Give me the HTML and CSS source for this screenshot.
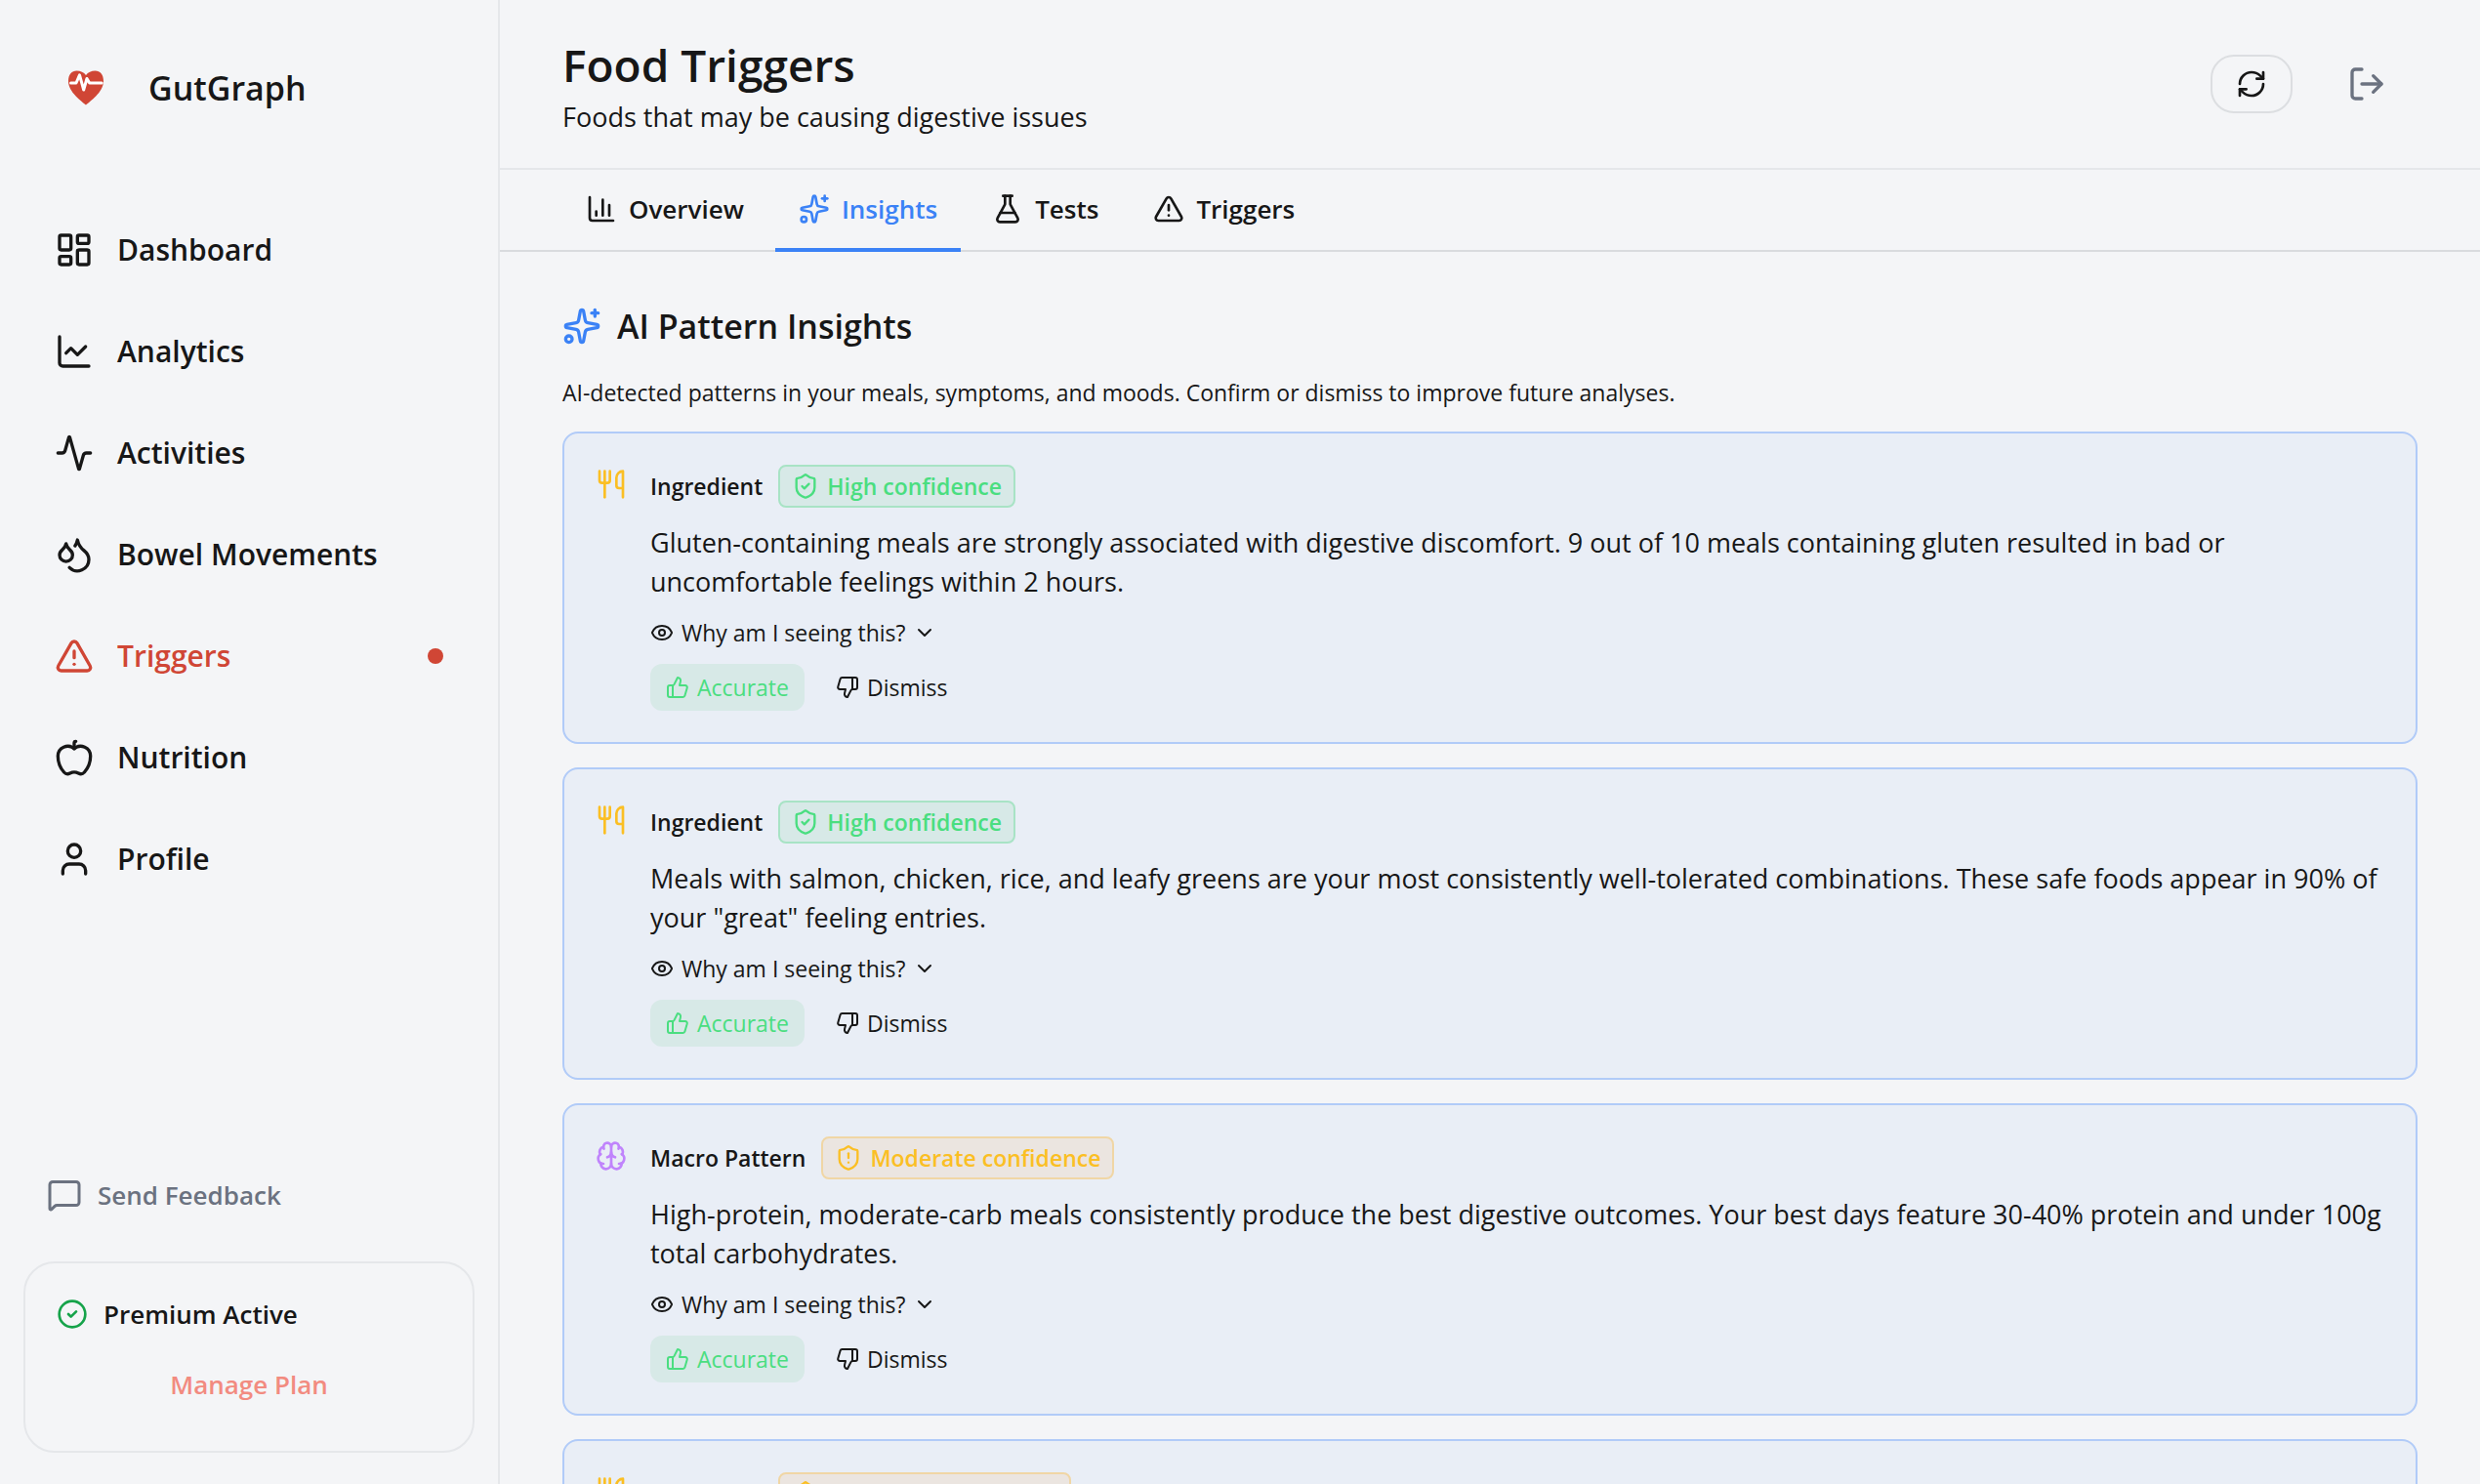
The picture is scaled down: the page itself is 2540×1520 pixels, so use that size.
FILE: index.html
```html
<!DOCTYPE html>
<html lang="en">
<head>
    <meta charset="UTF-8">
    <meta name="viewport" content="width=device-width, initial-scale=1.0">
    <title>GutGraph - Food Triggers</title>
    <link rel="stylesheet" href="styles.css">
</head>
<body>
    <!-- Icon sprite -->
    <svg class="sprite" aria-hidden="true">
        <symbol id="i-dashboard" viewBox="0 0 24 24"><rect width="7" height="9" x="3" y="3" rx="1"/><rect width="7" height="5" x="14" y="3" rx="1"/><rect width="7" height="9" x="14" y="12" rx="1"/><rect width="7" height="5" x="3" y="16" rx="1"/></symbol>
        <symbol id="i-line" viewBox="0 0 24 24"><path d="M3 3v16a2 2 0 0 0 2 2h16"/><path d="m19 9-5 5-4-4-3 3"/></symbol>
        <symbol id="i-activity" viewBox="0 0 24 24"><path d="M22 12h-2.48a2 2 0 0 0-1.93 1.46l-2.35 8.36a.25.25 0 0 1-.48 0L9.24 2.18a.25.25 0 0 0-.48 0l-2.35 8.36A2 2 0 0 1 4.49 12H2"/></symbol>
        <symbol id="i-droplets" viewBox="0 0 24 24"><path d="M7 16.3c2.2 0 4-1.83 4-4.05 0-1.16-.57-2.26-1.71-3.19S7.29 6.75 7 5.3c-.29 1.45-1.14 2.84-2.29 3.76S3 11.1 3 12.25c0 2.22 1.8 4.05 4 4.05z"/><path d="M12.56 6.6A10.97 10.97 0 0 0 14 3.02c.5 2.5 2 4.9 4 6.5s3 3.5 3 5.5a6.98 6.98 0 0 1-11.91 4.97"/></symbol>
        <symbol id="i-alert" viewBox="0 0 24 24"><path d="m21.73 18-8-14a2 2 0 0 0-3.48 0l-8 14A2 2 0 0 0 4 21h16a2 2 0 0 0 1.73-3"/><path d="M12 9v4"/><path d="M12 17h.01"/></symbol>
        <symbol id="i-apple" viewBox="0 0 24 24"><path d="M12 6.528V3a1 1 0 0 1 1-1h0"/><path d="M18.237 21A15 15 0 0 0 22 11a6 6 0 0 0-10-4.472A6 6 0 0 0 2 11a15.1 15.1 0 0 0 3.763 10 3 3 0 0 0 3.648.648 5.5 5.5 0 0 1 5.178 0A3 3 0 0 0 18.237 21"/></symbol>
        <symbol id="i-user" viewBox="0 0 24 24"><path d="M19 21v-2a4 4 0 0 0-4-4H9a4 4 0 0 0-4 4v2"/><circle cx="12" cy="7" r="4"/></symbol>
        <symbol id="i-message" viewBox="0 0 24 24"><path d="M22 17a2 2 0 0 1-2 2H6.828a2 2 0 0 0-1.414.586l-2.202 2.202A.71.71 0 0 1 2 21.286V5a2 2 0 0 1 2-2h16a2 2 0 0 1 2 2z"/></symbol>
        <symbol id="i-circle-check" viewBox="0 0 24 24"><circle cx="12" cy="12" r="10"/><path d="m9 12 2 2 4-4"/></symbol>
        <symbol id="i-refresh" viewBox="0 0 24 24"><path d="M3 12a9 9 0 0 1 9-9 9.75 9.75 0 0 1 6.74 2.74L21 8"/><path d="M21 3v5h-5"/><path d="M21 12a9 9 0 0 1-9 9 9.75 9.75 0 0 1-6.74-2.74L3 16"/><path d="M8 16H3v5"/></symbol>
        <symbol id="i-logout" viewBox="0 0 24 24"><path d="m16 17 5-5-5-5"/><path d="M21 12H9"/><path d="M9 21H5a2 2 0 0 1-2-2V5a2 2 0 0 1 2-2h4"/></symbol>
        <symbol id="i-bars" viewBox="0 0 24 24"><path d="M3 3v16a2 2 0 0 0 2 2h16"/><path d="M18 17V9"/><path d="M13 17V5"/><path d="M8 17v-3"/></symbol>
        <symbol id="i-sparkles" viewBox="0 0 24 24"><path d="M11.017 2.814a1 1 0 0 1 1.966 0l1.051 5.558a2 2 0 0 0 1.594 1.594l5.558 1.051a1 1 0 0 1 0 1.966l-5.558 1.051a2 2 0 0 0-1.594 1.594l-1.051 5.558a1 1 0 0 1-1.966 0l-1.051-5.558a2 2 0 0 0-1.594-1.594l-5.558-1.051a1 1 0 0 1 0-1.966l5.558-1.051a2 2 0 0 0 1.594-1.594z"/><path d="M20 2v4"/><path d="M22 4h-4"/><circle cx="4" cy="20" r="2"/></symbol>
        <symbol id="i-flask" viewBox="0 0 24 24"><path d="M14 2v6a2 2 0 0 0 .245.96l5.51 10.08A2 2 0 0 1 18 22H6a2 2 0 0 1-1.755-2.96l5.51-10.08A2 2 0 0 0 10 8V2"/><path d="M6.453 15h11.094"/><path d="M8.5 2h7"/></symbol>
        <symbol id="i-utensils" viewBox="0 0 24 24"><path d="M3 2v7c0 1.1.9 2 2 2h4a2 2 0 0 0 2-2V2"/><path d="M7 2v20"/><path d="M21 15V2a5 5 0 0 0-5 5v6c0 1.1.9 2 2 2h3Zm0 0v7"/></symbol>
        <symbol id="i-brain" viewBox="0 0 24 24"><path d="M12 18V5"/><path d="M15 13a4.17 4.17 0 0 1-3-4 4.17 4.17 0 0 1-3 4"/><path d="M17.598 6.5A3 3 0 1 0 12 5a3 3 0 1 0-5.598 1.5"/><path d="M17.997 5.125a4 4 0 0 1 2.526 5.77"/><path d="M18 18a4 4 0 0 0 2-7.464"/><path d="M19.967 17.483A4 4 0 1 1 12 18a4 4 0 1 1-7.967-.517"/><path d="M6 18a4 4 0 0 1-2-7.464"/><path d="M6.003 5.125a4 4 0 0 0-2.526 5.77"/></symbol>
        <symbol id="i-shield-check" viewBox="0 0 24 24"><path d="M20 13c0 5-3.5 7.5-7.66 8.95a1 1 0 0 1-.67-.01C7.5 20.5 4 18 4 13V6a1 1 0 0 1 1-1c2 0 4.5-1.2 6.24-2.72a1.17 1.17 0 0 1 1.52 0C14.51 3.81 17 5 19 5a1 1 0 0 1 1 1z"/><path d="m9 12 2 2 4-4"/></symbol>
        <symbol id="i-shield-alert" viewBox="0 0 24 24"><path d="M20 13c0 5-3.5 7.5-7.66 8.95a1 1 0 0 1-.67-.01C7.5 20.5 4 18 4 13V6a1 1 0 0 1 1-1c2 0 4.5-1.2 6.24-2.72a1.17 1.17 0 0 1 1.52 0C14.51 3.81 17 5 19 5a1 1 0 0 1 1 1z"/><path d="M12 8v4"/><path d="M12 16h.01"/></symbol>
        <symbol id="i-eye" viewBox="0 0 24 24"><path d="M2.062 12.348a1 1 0 0 1 0-.696 10.75 10.75 0 0 1 19.876 0 1 1 0 0 1 0 .696 10.75 10.75 0 0 1-19.876 0"/><circle cx="12" cy="12" r="3"/></symbol>
        <symbol id="i-chevron" viewBox="0 0 24 24"><path d="m6 9 6 6 6-6"/></symbol>
        <symbol id="i-up" viewBox="0 0 24 24"><path d="M7 10v12"/><path d="M15 5.88 14 10h5.83a2 2 0 0 1 1.92 2.56l-2.33 8A2 2 0 0 1 17.5 22H4a2 2 0 0 1-2-2v-8a2 2 0 0 1 2-2h2.76a2 2 0 0 0 1.79-1.11L12 2a3.13 3.13 0 0 1 3 3.88Z"/></symbol>
        <symbol id="i-down" viewBox="0 0 24 24"><path d="M17 14V2"/><path d="M9 18.12 10 14H4.17a2 2 0 0 1-1.92-2.56l2.33-8A2 2 0 0 1 6.5 2H20a2 2 0 0 1 2 2v8a2 2 0 0 1-2 2h-2.76a2 2 0 0 0-1.79 1.11L12 22a3.13 3.13 0 0 1-3-3.88Z"/></symbol>
    </svg>

    <div class="app">
        <!-- Sidebar -->
        <aside class="sidebar">
            <div class="brand">
                <svg class="logo" viewBox="0 0 36 36" aria-hidden="true">
                    <path class="heart" d="M18 35.500C14 32 0 22.500 0 11 0 4.500 3.500.5 8.500.5c4 0 7.500 1.500 9.500 4.500C20 2 23.500.5 27.500.5 32.500.5 36 4.500 36 11c0 11.500-14 21-18 24.500z"/>
                    <path class="pulse" d="M2.500 13H8l3.500-8.200L15.700 20 19 8.500l2.700 4.500h12.500"/>
                </svg>
                <span>GutGraph</span>
            </div>
            <nav class="nav">
                <a href="#"><svg class="icon icon-lg"><use href="#i-dashboard"/></svg>Dashboard</a>
                <a href="#"><svg class="icon icon-lg"><use href="#i-line"/></svg>Analytics</a>
                <a href="#"><svg class="icon icon-lg"><use href="#i-activity"/></svg>Activities</a>
                <a href="#"><svg class="icon icon-lg"><use href="#i-droplets"/></svg>Bowel Movements</a>
                <a href="#" class="active"><svg class="icon icon-lg"><use href="#i-alert"/></svg>Triggers<i class="dot"></i></a>
                <a href="#"><svg class="icon icon-lg"><use href="#i-apple"/></svg>Nutrition</a>
                <a href="#"><svg class="icon icon-lg"><use href="#i-user"/></svg>Profile</a>
            </nav>
            <button class="feedback"><svg class="icon icon-md"><use href="#i-message"/></svg>Send Feedback</button>
            <div class="plan">
                <div class="plan-status"><svg class="icon"><use href="#i-circle-check"/></svg>Premium Active</div>
                <button class="manage">Manage Plan</button>
            </div>
        </aside>

        <!-- Main -->
        <main class="main">
            <header class="header">
                <div>
                    <h1>Food Triggers</h1>
                    <p>Foods that may be causing digestive issues</p>
                </div>
                <div class="header-actions">
                    <button class="refresh" aria-label="Refresh"><svg class="icon"><use href="#i-refresh"/></svg></button>
                    <button class="logout" aria-label="Log out"><svg class="icon icon-lg"><use href="#i-logout"/></svg></button>
                </div>
            </header>

            <div class="tabs">
                <button><svg class="icon"><use href="#i-bars"/></svg>Overview</button>
                <button class="active"><svg class="icon"><use href="#i-sparkles"/></svg>Insights</button>
                <button><svg class="icon"><use href="#i-flask"/></svg>Tests</button>
                <button><svg class="icon"><use href="#i-alert"/></svg>Triggers</button>
            </div>

            <section class="insights">
                <h2><svg class="icon icon-lg"><use href="#i-sparkles"/></svg>AI Pattern Insights</h2>
                <p class="intro">AI-detected patterns in your meals, symptoms, and moods. Confirm or dismiss to improve future analyses.</p>

                <article class="card">
                    <svg class="icon kind ingredient"><use href="#i-utensils"/></svg>
                    <div class="card-body">
                        <div class="card-head">
                            <h3>Ingredient</h3>
                            <span class="badge high"><svg class="icon icon-sm"><use href="#i-shield-check"/></svg>High confidence</span>
                        </div>
                        <p>Gluten-containing meals are strongly associated with digestive discomfort. 9 out of 10 meals containing gluten resulted in bad or uncomfortable feelings within 2 hours.</p>
                        <button class="why"><svg class="icon icon-xs"><use href="#i-eye"/></svg>Why am I seeing this?<svg class="icon icon-xs"><use href="#i-chevron"/></svg></button>
                        <div class="votes">
                            <button class="accurate"><svg class="icon icon-xs"><use href="#i-up"/></svg>Accurate</button>
                            <button><svg class="icon icon-xs"><use href="#i-down"/></svg>Dismiss</button>
                        </div>
                    </div>
                </article>

                <article class="card">
                    <svg class="icon kind ingredient"><use href="#i-utensils"/></svg>
                    <div class="card-body">
                        <div class="card-head">
                            <h3>Ingredient</h3>
                            <span class="badge high"><svg class="icon icon-sm"><use href="#i-shield-check"/></svg>High confidence</span>
                        </div>
                        <p>Meals with salmon, chicken, rice, and leafy greens are your most consistently well-tolerated combinations. These safe foods appear in 90% of your "great" feeling entries.</p>
                        <button class="why"><svg class="icon icon-xs"><use href="#i-eye"/></svg>Why am I seeing this?<svg class="icon icon-xs"><use href="#i-chevron"/></svg></button>
                        <div class="votes">
                            <button class="accurate"><svg class="icon icon-xs"><use href="#i-up"/></svg>Accurate</button>
                            <button><svg class="icon icon-xs"><use href="#i-down"/></svg>Dismiss</button>
                        </div>
                    </div>
                </article>

                <article class="card">
                    <svg class="icon kind macro"><use href="#i-brain"/></svg>
                    <div class="card-body">
                        <div class="card-head">
                            <h3>Macro Pattern</h3>
                            <span class="badge moderate"><svg class="icon icon-sm"><use href="#i-shield-alert"/></svg>Moderate confidence</span>
                        </div>
                        <p>High-protein, moderate-carb meals consistently produce the best digestive outcomes. Your best days feature 30-40% protein and under 100g total carbohydrates.</p>
                        <button class="why"><svg class="icon icon-xs"><use href="#i-eye"/></svg>Why am I seeing this?<svg class="icon icon-xs"><use href="#i-chevron"/></svg></button>
                        <div class="votes">
                            <button class="accurate"><svg class="icon icon-xs"><use href="#i-up"/></svg>Accurate</button>
                            <button><svg class="icon icon-xs"><use href="#i-down"/></svg>Dismiss</button>
                        </div>
                    </div>
                </article>

                <article class="card">
                    <svg class="icon kind ingredient"><use href="#i-utensils"/></svg>
                    <div class="card-body">
                        <div class="card-head">
                            <h3>Ingredient</h3>
                            <span class="badge moderate"><svg class="icon icon-sm"><use href="#i-shield-alert"/></svg>Moderate confidence</span>
                        </div>
                    </div>
                </article>
            </section>
        </main>
    </div>
</body>
</html>
```
FILE: styles.css
```css
* {
    box-sizing: border-box;
    margin: 0;
    padding: 0;
}
body {
    font-family: 'Open Sans', 'Noto Sans', sans-serif;
    font-size: 26px;
    line-height: 40px;
    color: #171717;
    background-color: #f4f5f7;
}
button {
    font: inherit;
    color: inherit;
    background: none;
    border: none;
    cursor: pointer;
}
a {
    color: inherit;
    text-decoration: none;
}
.sprite {
    display: none;
}

/* Icons */
.icon {
    width: 32px;
    height: 32px;
    flex-shrink: 0;
    fill: none;
    stroke: currentColor;
    stroke-width: 2;
    stroke-linecap: round;
    stroke-linejoin: round;
}
.icon-lg {
    width: 40px;
    height: 40px;
}
.icon-md {
    width: 36px;
    height: 36px;
}
.icon-sm {
    width: 28px;
    height: 28px;
}
.icon-xs {
    width: 24px;
    height: 24px;
}

.app {
    display: flex;
    height: 100vh;
    overflow: hidden;
}

/* Sidebar */
.sidebar {
    display: flex;
    flex-direction: column;
    width: 512px;
    flex-shrink: 0;
    padding: 32px 24px;
    border-right: 2px solid #e5e7ea;
}
.brand {
    display: flex;
    align-items: center;
    gap: 46px;
    height: 116px;
    padding: 0 46px;
    font-size: 34px;
    font-weight: 600;
}
.logo {
    width: 36px;
    height: 36px;
}
.heart {
    fill: #d04635;
}
.pulse {
    fill: none;
    stroke: #fff;
    stroke-width: 3;
    stroke-linejoin: round;
    stroke-linecap: round;
}
.nav {
    display: flex;
    flex-direction: column;
    gap: 8px;
    margin-top: 60px;
}
.nav a {
    display: flex;
    align-items: center;
    gap: 24px;
    height: 96px;
    padding: 0 32px;
    font-size: 30px;
    font-weight: 600;
}
.nav .active {
    color: #d04635;
}
.dot {
    width: 16px;
    height: 16px;
    margin-left: auto;
    border-radius: 50%;
    background-color: #d04635;
}
.feedback {
    display: flex;
    align-items: center;
    gap: 16px;
    height: 72px;
    margin-top: auto;
    margin-bottom: 32px;
    padding: 0 24px;
    font-weight: 600;
    color: #6b7280;
}
.plan {
    height: 196px;
    padding: 32px;
    border: 2px solid #e5e7ea;
    border-radius: 32px;
    font-weight: 600;
}
.plan-status {
    display: flex;
    align-items: center;
    gap: 16px;
}
.plan-status .icon {
    color: #16a34a;
}
.manage {
    display: block;
    width: 100%;
    height: 64px;
    margin-top: 20px;
    color: #f28b80;
}

/* Header */
.main {
    flex: 1;
    min-width: 0;
}
.header {
    display: flex;
    justify-content: space-between;
    height: 174px;
    padding: 36px 64px;
    border-bottom: 2px solid #e5e7ea;
}
.header h1 {
    margin-bottom: 4px;
    font-size: 46px;
    line-height: 60px;
    font-weight: 600;
}
.header p {
    font-size: 27px;
}
.header-actions {
    display: flex;
    align-items: center;
    gap: 24px;
    height: 100px;
}
.refresh {
    display: flex;
    padding: 12px 24px;
    border: 2px solid #dcdee1;
    border-radius: 24px;
}
.logout {
    display: flex;
    padding: 12px 32px;
    color: #6b7280;
}

/* Tabs */
.tabs {
    display: flex;
    gap: 8px;
    height: 84px;
    padding: 0 64px;
    border-bottom: 2px solid #d9dbde;
}
.tabs button {
    display: flex;
    align-items: center;
    gap: 12px;
    height: 84px;
    padding: 0 24px;
    border-bottom: 4px solid transparent;
    font-weight: 600;
}
.tabs .active {
    color: #3b82f6;
    border-color: #3b82f6;
}

/* Insights */
.insights {
    display: flex;
    flex-direction: column;
    gap: 24px;
    padding: 48px 64px;
}
.insights h2 {
    display: flex;
    align-items: center;
    gap: 16px;
    height: 56px;
    font-size: 34px;
    font-weight: 600;
}
.insights h2 .icon {
    color: #3b82f6;
}
.intro {
    font-size: 23px;
    line-height: 32px;
}
.card {
    display: flex;
    gap: 24px;
    min-height: 320px;
    flex-shrink: 0;
    padding: 32px;
    border: 2px solid #b1cbf8;
    border-radius: 16px;
    background-color: #e9eef6;
}
.kind {
    margin-top: 4px;
}
.ingredient {
    color: #fbbf24;
}
.macro {
    color: #c084fc;
}
.card-body {
    flex: 1;
    display: flex;
    flex-direction: column;
    align-items: flex-start;
    gap: 16px;
    font-size: 27px;
}
.card-head {
    display: flex;
    align-items: center;
    gap: 16px;
}
.card-head h3 {
    font-size: 23px;
    line-height: 32px;
    font-weight: 600;
}
.badge {
    display: flex;
    align-items: center;
    gap: 8px;
    height: 44px;
    padding: 0 12px;
    border: 2px solid;
    border-radius: 8px;
    font-size: 23px;
    font-weight: 600;
}
.high {
    color: #4ade80;
    background-color: #d7e9e7;
    border-color: #a8e3c5;
}
.moderate {
    color: #fbbf24;
    background-color: #ebe5e0;
    border-color: #f0d6a5;
}
.why {
    display: flex;
    align-items: center;
    gap: 8px;
    font-size: 23px;
    line-height: 32px;
}
.votes {
    display: flex;
    gap: 16px;
}
.votes button {
    display: flex;
    align-items: center;
    gap: 8px;
    height: 48px;
    padding: 0 16px;
    border-radius: 12px;
    font-size: 23px;
}
.votes .accurate {
    color: #4ade80;
    background-color: #d7e9e7;
}
```
